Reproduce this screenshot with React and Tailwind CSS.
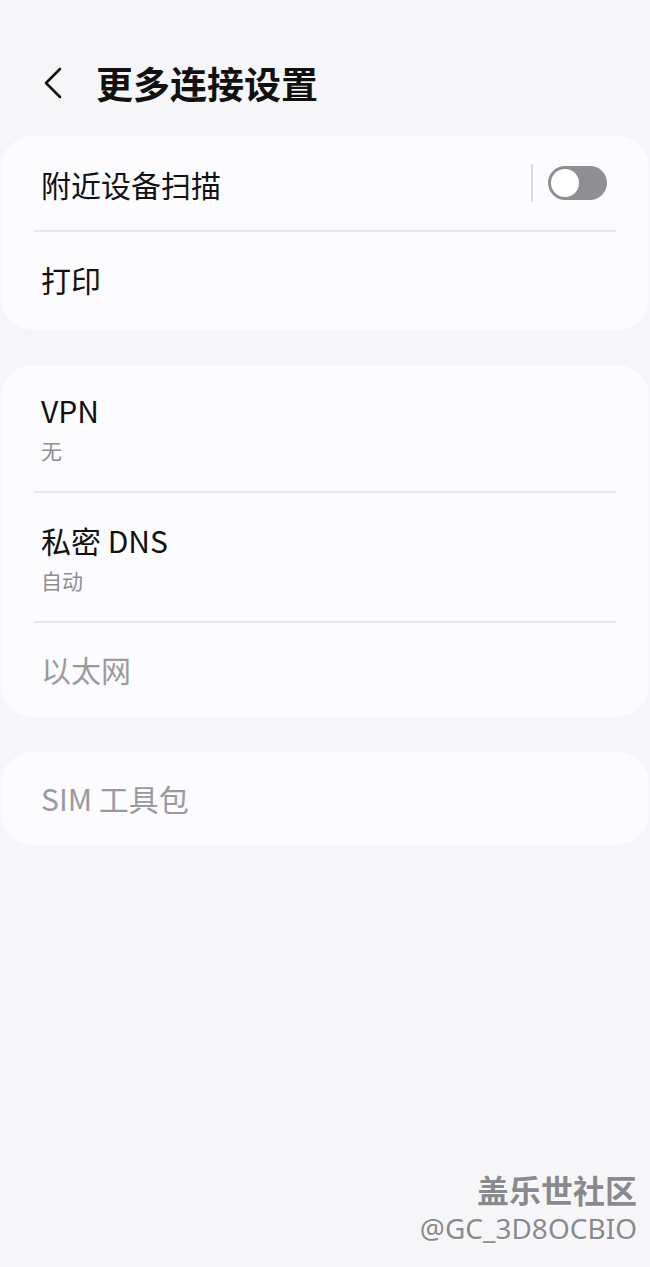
const FONT = { fontFamily: '"Noto Sans CJK SC", "Noto Sans", sans-serif' };

function Divider() {
  return <div className="mx-[33px] h-[2px] bg-[#e8e8ec]" />;
}

function Row({ title, sub, dim, className = '' }) {
  return (
    <div className={`flex flex-col justify-center pl-[40px] ${className}`}>
      <div className={`text-[30px] leading-[36px] ${dim ? 'text-[#9a9a9e]' : 'text-[#111]'}`}>{title}</div>
      {sub && <div className="mt-[9px] text-[21px] leading-[26px] text-[#8d8d92]">{sub}</div>}
    </div>
  );
}

function Toggle() {
  return (
    <div className="flex items-center gap-[15px] pr-[42px]">
      <div className="h-[38px] w-[2px] bg-[#dcdce0]" />
      <div className="flex h-[34px] w-[59px] items-center rounded-full bg-[#8e8e93] px-[3px]">
        <div className="h-[28px] w-[28px] rounded-full bg-white" />
      </div>
    </div>
  );
}

export default function App() {
  return (
    <div className="relative min-h-[1267px] w-[650px] bg-[#f6f6f9]" style={FONT}>
      <header className="flex h-[136px] items-center gap-[30px] pl-[40px] pt-[30px]">
        <svg width="26" height="34" viewBox="0 0 26 34" fill="none">
          <path d="M20 3 L6 17 L20 31" stroke="#111" strokeWidth="2.6" strokeLinecap="round" strokeLinejoin="round" />
        </svg>
        <h1 className="text-[37px] font-bold leading-none text-[#111]">更多连接设置</h1>
      </header>

      <section className="mx-[1px] rounded-[32px] bg-[#fcfcff]">
        <div className="flex h-[94px] items-center justify-between">
          <Row title="附近设备扫描" className="pt-[2px]" />
          <Toggle />
        </div>
        <Divider />
        <Row title="打印" className="h-[98px] pb-[4px]" />
      </section>

      <section className="mx-[1px] mt-[35px] rounded-[32px] bg-[#fcfcff]">
        <Row title="VPN" sub="无" className="h-[126px] pb-[2px]" />
        <Divider />
        <Row title="私密 DNS" sub="自动" className="h-[128px]" />
        <Divider />
        <Row title="以太网" dim className="h-[94px] pb-[2px]" />
      </section>

      <section className="mx-[1px] mt-[35px] rounded-[32px] bg-[#fcfcff]">
        <Row title="SIM 工具包" dim className="h-[93px] pb-[2px]" />
      </section>

      <div className="absolute right-[13px] top-[1168px] flex flex-col items-end text-[#8a8a8e] [text-shadow:1px_1px_0_#ffffff]">
        <div className="text-[32px] font-bold leading-[42px]">盖乐世社区</div>
        <div className="text-[28px] leading-[36px]" style={{ fontFamily: '"Noto Sans", sans-serif' }}>@GC_3D8OCBIO</div>
      </div>
    </div>
  );
}
